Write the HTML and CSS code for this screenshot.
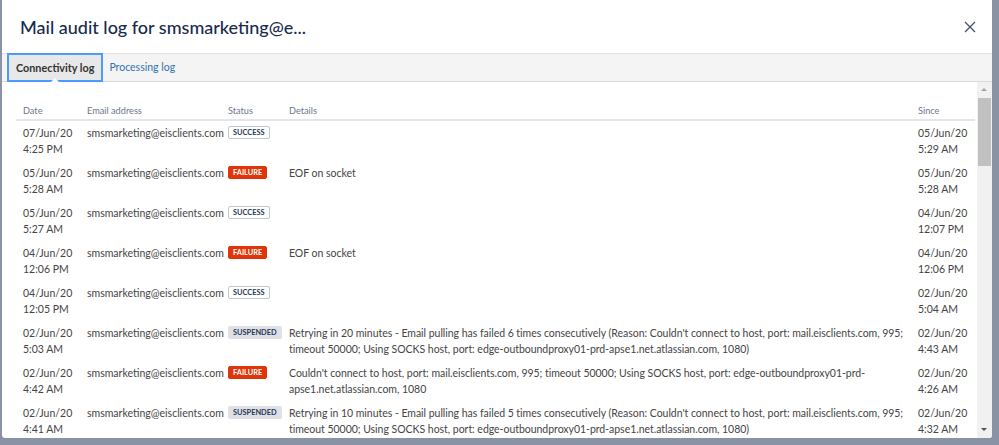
FILE: index.html
```html
<!DOCTYPE html>
<html lang="en">
<head>
    <meta charset="UTF-8">
    <title>Mail audit log</title>
    <link rel="stylesheet" href="styles.css">
</head>
<body>
    <div class="modal">
        <!-- Header -->
        <div class="modal-header">
            <h2>Mail audit log for smsmarketing@e...</h2>
            <button class="close" aria-label="Close">
                <svg width="12" height="12" viewBox="0 0 12 12"><path d="M1 1 L11 11 M11 1 L1 11" stroke="#42526e" stroke-width="1.3" fill="none"/></svg>
            </button>
        </div>

        <!-- Tabs -->
        <div class="tabs">
            <a class="tab active">Connectivity log</a>
            <a class="tab">Processing log</a>
        </div>

        <!-- Log table -->
        <div class="modal-body">
            <div class="log-scroll">
                <table class="log">
                    <colgroup>
                        <col class="c-date"><col class="c-email"><col class="c-status"><col class="c-details"><col class="c-since">
                    </colgroup>
                    <thead>
                        <tr><th>Date</th><th>Email address</th><th>Status</th><th>Details</th><th>Since</th></tr>
                    </thead>
                    <tbody>
                        <tr>
                            <td>07/Jun/20 4:25 PM</td><td>smsmarketing@eisclients.com</td>
                            <td><span class="lozenge success">Success</span></td><td class="details"></td>
                            <td>05/Jun/20 5:29 AM</td>
                        </tr>
                        <tr>
                            <td>05/Jun/20 5:28 AM</td><td>smsmarketing@eisclients.com</td>
                            <td><span class="lozenge failure">Failure</span></td><td class="details">EOF on socket</td>
                            <td>05/Jun/20 5:28 AM</td>
                        </tr>
                        <tr>
                            <td>05/Jun/20 5:27 AM</td><td>smsmarketing@eisclients.com</td>
                            <td><span class="lozenge success">Success</span></td><td class="details"></td>
                            <td>04/Jun/20 12:07 PM</td>
                        </tr>
                        <tr>
                            <td>04/Jun/20 12:06 PM</td><td>smsmarketing@eisclients.com</td>
                            <td><span class="lozenge failure">Failure</span></td><td class="details">EOF on socket</td>
                            <td>04/Jun/20 12:06 PM</td>
                        </tr>
                        <tr>
                            <td>04/Jun/20 12:05 PM</td><td>smsmarketing@eisclients.com</td>
                            <td><span class="lozenge success">Success</span></td><td class="details"></td>
                            <td>02/Jun/20 5:04 AM</td>
                        </tr>
                        <tr>
                            <td>02/Jun/20 5:03 AM</td><td>smsmarketing@eisclients.com</td>
                            <td><span class="lozenge suspended">Suspended</span></td>
                            <td class="details">Retrying in 20 minutes - Email pulling has failed 6 times consecutively (Reason: Couldn't connect to host, port: mail.eisclients.com, 995; timeout 50000; Using SOCKS host, port: edge-outboundproxy01-prd-apse1.net.atlassian.com, 1080)</td>
                            <td>02/Jun/20 4:43 AM</td>
                        </tr>
                        <tr>
                            <td>02/Jun/20 4:42 AM</td><td>smsmarketing@eisclients.com</td>
                            <td><span class="lozenge failure">Failure</span></td>
                            <td class="details">Couldn't connect to host, port: mail.eisclients.com, 995; timeout 50000; Using SOCKS host, port: edge-outboundproxy01-prd-apse1.net.atlassian.com, 1080</td>
                            <td>02/Jun/20 4:26 AM</td>
                        </tr>
                        <tr>
                            <td>02/Jun/20 4:41 AM</td><td>smsmarketing@eisclients.com</td>
                            <td><span class="lozenge suspended">Suspended</span></td>
                            <td class="details">Retrying in 10 minutes - Email pulling has failed 5 times consecutively (Reason: Couldn't connect to host, port: mail.eisclients.com, 995; timeout 50000; Using SOCKS host, port: edge-outboundproxy01-prd-apse1.net.atlassian.com, 1080)</td>
                            <td>02/Jun/20 4:32 AM</td>
                        </tr>
                    </tbody>
                </table>
            </div>

            <!-- Scrollbar -->
            <div class="scrollbar">
                <span class="arrow up"></span>
                <span class="thumb"></span>
                <span class="arrow down"></span>
            </div>
        </div>
    </div>
</body>
</html>
```

FILE: styles.css
```css
/* General */
body {
    margin: 0;
    padding: 0 0 0 2px;
    height: 445px;
    overflow: hidden;
    background: #8a93a5;
    font-family: Lato, "Liberation Sans", sans-serif;
    color: #444;
}

/* Modal */
.modal {
    width: 990px;
    height: 438px;
    background: #ffffff;
    border-radius: 0 0 3px 3px;
    display: flex;
    flex-direction: column;
    overflow: hidden;
}
.modal-header {
    height: 53px;
    padding: 0 17px 0 18px;
    display: flex;
    align-items: center;
    justify-content: space-between;
}
.modal-header h2 {
    margin: 0;
    font-size: 18px;
    font-weight: 500;
    color: #172b4d;
}
.close {
    border: none;
    background: none;
    padding: 0;
    margin-right: -1px;
    display: flex;
}

/* Tabs */
.tabs {
    height: 27px;
    display: flex;
    padding-left: 5px;
    background: #f4f4f4;
    border-top: 1px solid #e2e2e2;
    border-bottom: 1px solid #dadada;
}
.tab {
    position: relative;
    padding: 0 6px 0 6px;
    line-height: 27px;
    font-size: 10.5px;
    color: #3572b0;
    cursor: pointer;
}
.tab.active {
    margin: -1px 0;
    padding: 0 7px;
    line-height: 25px;
    border: 2px solid #4c9aff;
    background: #e8e8e8;
    color: #333;
    font-weight: bold;
    font-size: 10.8px;
}
.tab.active:after {
    content: '';
    position: absolute;
    left: 41px;
    bottom: -3px;
    border: 5px solid transparent;
    border-bottom-color: #ffffff;
    border-top: none;
}

/* Body */
.modal-body {
    flex: 1;
    display: flex;
    overflow: hidden;
}
.log-scroll {
    flex: 1;
    overflow: hidden;
    padding: 20px 2px 0 14px;
}

/* Table */
.log {
    width: 100%;
    border-collapse: collapse;
    table-layout: fixed;
    font-size: 10.5px;
}
.c-date { width: 64px; }
.c-email { width: 141px; }
.c-status { width: 61px; }
.c-details { width: 629px; }
.c-since { width: 64px; }
.log th {
    padding: 1px 7px 0;
    line-height: 16px;
    text-align: left;
    font-size: 9.2px;
    font-weight: normal;
    color: #6b778c;
    border-bottom: 2px solid #e4e6ea;
}
.log td {
    padding: 4px 7px;
    line-height: 16px;
    vertical-align: top;
}
.log td.details {
    padding-right: 0;
    letter-spacing: -0.03px;
}

/* Lozenges */
.lozenge {
    display: inline-block;
    margin-top: 1px;
    padding: 0 4px;
    height: 11px;
    line-height: 11px;
    font-size: 7.4px;
    font-weight: bold;
    text-transform: uppercase;
    border-radius: 2px;
    vertical-align: top;
    white-space: nowrap;
}
.lozenge.success {
    background: #ffffff;
    color: #253858;
    border: 1px solid #c1c7d0;
}
.lozenge.failure {
    background: #de350b;
    color: #ffffff;
    border: 1px solid #de350b;
}
.lozenge.suspended {
    background: #dfe1e6;
    color: #253858;
    border: 1px solid #dfe1e6;
}

/* Scrollbar */
.scrollbar {
    width: 15px;
    background: #f1f1f1;
    display: flex;
    flex-direction: column;
    align-items: center;
}
.scrollbar .thumb {
    width: 13px;
    height: 68px;
    background: #c1c1c1;
}
.scrollbar .arrow {
    height: 16px;
    width: 15px;
    position: relative;
}
.scrollbar .arrow:after {
    content: '';
    position: absolute;
    left: 4px;
    top: 6px;
    border: 3.5px solid transparent;
}
.scrollbar .arrow.up:after {
    border-bottom-color: #a3a3a3;
    border-top: none;
}
.scrollbar .arrow.down {
    margin-top: auto;
}
.scrollbar .arrow.down:after {
    border-top-color: #505050;
    border-bottom: none;
}
```
